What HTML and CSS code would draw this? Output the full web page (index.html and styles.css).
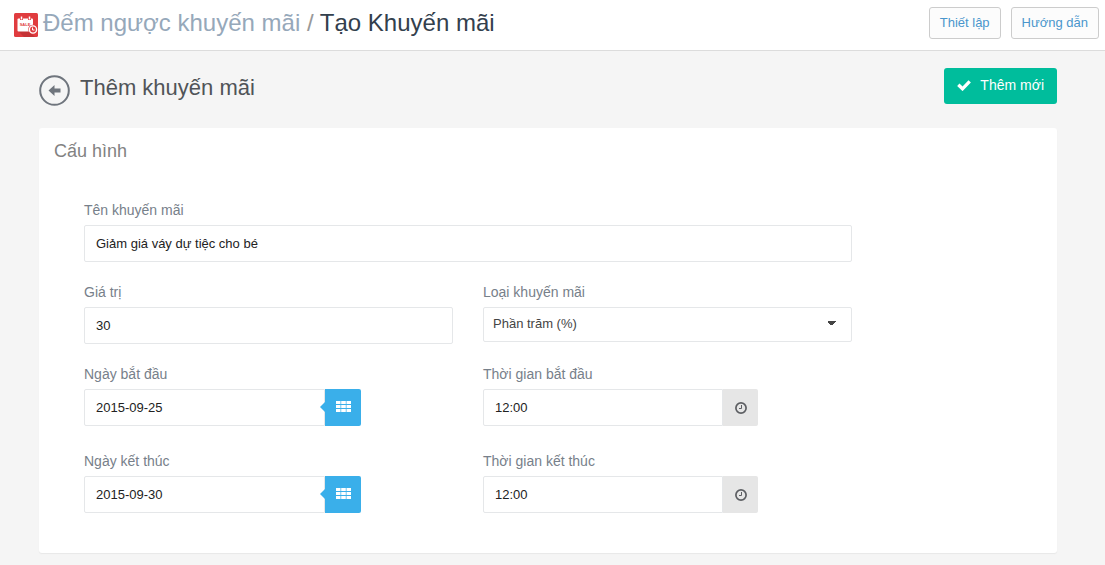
FILE: index.html
```html
<!DOCTYPE html>
<html lang="vi">
<head>
<meta charset="utf-8">
<meta name="viewport" content="width=device-width, initial-scale=1">
<title>Tạo Khuyến mãi</title>
<link rel="stylesheet" href="styles.css">
</head>
<body>
<svg class="sprite" aria-hidden="true">
  <symbol id="grid" viewBox="0 0 15 11"><path d="M0 0h4.500v3H0zM5.200 0h4.600v3H5.200zM10.500 0H15v3h-4.500zM0 4h4.500v3H0zM5.200 4h4.600v3H5.200zM10.500 4H15v3h-4.500zM0 8h4.500v3H0zM5.200 8h4.600v3H5.200zM10.500 8H15v3h-4.500z" fill="currentColor"/></symbol>
  <symbol id="clock" viewBox="0 0 12 12"><circle cx="6" cy="6" r="5.1" fill="none" stroke="currentColor" stroke-width="1.7"/><path d="M6.500 3v3.500H4" fill="none" stroke="currentColor"/></symbol>
</svg>
<header class="topbar">
  <svg class="logo" viewBox="0 0 24 24" aria-hidden="true">
    <rect width="24" height="24" rx="1.500" fill="#e03c3f"/>
    <path d="M4 18h11l6 6H10z" fill="#c53336"/>
    <rect x="3.500" y="5.500" width="15.500" height="13" rx="1" fill="#fff"/>
    <path d="M7.500 3.500v3.500M15.500 3.500v3.500" stroke="#e03c3f" stroke-width="3"/>
    <path d="M7.500 3.500v3M15.500 3.500v3" stroke="#fff" stroke-width="1.500"/>
    <text class="logo-text" x="11" y="13">SALE</text>
    <circle cx="19" cy="16.500" r="4.800" fill="#e03c3f"/>
    <circle cx="19" cy="16.500" r="3.600" fill="none" stroke="#fff" stroke-width="1.400"/>
    <path d="M18.500 14.500v2.500h2" fill="none" stroke="#fff"/>
  </svg>
  <h1 class="crumbs"><a class="crumb-link" href="#">Đếm ngược khuyến mãi</a> <span class="crumb-sep">/</span> Tạo Khuyến mãi</h1>
  <nav class="top-actions">
    <a class="btn-light" href="#">Thiết lập</a>
    <a class="btn-light" href="#">Hướng dẫn</a>
  </nav>
</header>
<main class="page">
  <div class="page-head">
    <div class="heading">
      <a class="back" href="#" aria-label="Quay lại"><svg class="back-icon" viewBox="0 0 31 31" aria-hidden="true"><circle cx="15.500" cy="15.500" r="14.300" fill="none" stroke="currentColor" stroke-width="2"/><path d="M9.500 15.500l6-5.500v3.500h6v4h-6V21z" fill="currentColor"/></svg></a>
      <h2 class="page-title">Thêm khuyến mãi</h2>
    </div>
    <button class="btn-primary" type="submit" form="promo"><svg class="check" viewBox="0 0 14 12" aria-hidden="true"><path d="M1.300 5.800l4.200 4 7.200-7.500" fill="none" stroke="currentColor" stroke-width="3.300"/></svg>Thêm mới</button>
  </div>
  <section class="card">
    <h3 class="card-title">Cấu hình</h3>
    <form class="form" id="promo">
      <div class="field wide"><label for="name">Tên khuyến mãi</label><input class="control" id="name" type="text" value="Giảm giá váy dự tiệc cho bé"></div>
      <div class="field"><label for="value">Giá trị</label><input class="control" id="value" type="text" value="30"></div>
      <div class="field"><label for="type">Loại khuyến mãi</label><select class="control select" id="type"><option>Phần trăm (%)</option></select></div>
      <div class="field"><label for="sd">Ngày bắt đầu</label><div class="group"><input class="control" id="sd" type="text" value="2015-09-25"><button class="addon blue" type="button" aria-label="Chọn ngày bắt đầu"><svg class="grid-icon"><use href="#grid"/></svg></button></div></div>
      <div class="field"><label for="st">Thời gian bắt đầu</label><div class="group time"><input class="control" id="st" type="text" value="12:00"><button class="addon gray" type="button" aria-label="Chọn giờ bắt đầu"><svg class="clock-icon"><use href="#clock"/></svg></button></div></div>
      <div class="field last"><label for="ed">Ngày kết thúc</label><div class="group"><input class="control" id="ed" type="text" value="2015-09-30"><button class="addon blue" type="button" aria-label="Chọn ngày kết thúc"><svg class="grid-icon"><use href="#grid"/></svg></button></div></div>
      <div class="field last"><label for="et">Thời gian kết thúc</label><div class="group time"><input class="control" id="et" type="text" value="12:00"><button class="addon gray" type="button" aria-label="Chọn giờ kết thúc"><svg class="clock-icon"><use href="#clock"/></svg></button></div></div>
    </form>
  </section>
</main>
</body>
</html>
```
FILE: styles.css
```css
* { box-sizing: border-box; }
body { margin: 0; background: #f5f5f5; font: 14px/20px "Liberation Sans", Arial, sans-serif; color: #77808a; }
a { text-decoration: none; }
input, select, button { font: inherit; margin: 0; }
.sprite { position: absolute; width: 0; height: 0; }
.topbar { display: flex; align-items: center; min-height: 51px; padding: 0 6px 4px 14px; background: #fff; border-bottom: 1px solid #dcdcdc; }
.logo { width: 24px; height: 28px; padding-top: 4px; margin-right: 5px; flex: none; }
.logo-text { font: bold 4px "Liberation Sans", Arial, sans-serif; fill: #e03c3f; text-anchor: middle; }
.crumbs { margin: 0; font-size: 24px; line-height: 32px; font-weight: normal; color: #33404d; }
.crumb-link { color: #96a8ba; }
.crumb-sep { color: #999; }
.top-actions { display: flex; gap: 10px; margin-left: auto; }
.btn-light { padding: 5px 10px; border: 1px solid #ccc; border-radius: 3px; background: #fcfcfc; color: #4a96cc; font-size: 13px; }
.page { padding: 17px 48px 12px 39px; }
.page-head { display: flex; justify-content: space-between; margin-bottom: 20px; }
.heading { display: flex; align-items: center; gap: 10px; padding-top: 4px; height: 40px; }
.back { color: #6f757d; }
.back-icon { display: block; width: 31px; height: 31px; }
.page-title { margin: 0; padding-bottom: 4px; font-size: 22px; line-height: 32px; font-weight: normal; color: #505458; }
.btn-primary { display: flex; align-items: center; gap: 9px; height: 36px; padding: 0 13px 2px; border: 0; border-radius: 3px; background: #00bd9c; color: #fff; }
.check { width: 14px; height: 12px; }
.card { padding: 12px 15px 40px; background: #fff; border-radius: 3px; box-shadow: 0 1px 1px #e8e8e8; }
.card-title { margin: 0; font-size: 18px; line-height: 22px; font-weight: normal; color: #828282; }
.form { display: grid; grid-template-columns: 1fr 1fr; gap: 20px 30px; padding: 38px 190px 0 30px; }
.wide { grid-column: 1 / -1; }
.last { margin-top: 5px; }
.field label { display: block; margin-bottom: 5px; }
.control { display: block; width: 100%; height: 37px; padding: 0 11px; border: 1px solid #e5e7e9; border-radius: 2px; background: #fff; color: #222; font-size: 13px; }
.select { height: 35px; padding: 0 9px 2px; appearance: none; color: #444; background: linear-gradient(to bottom left, #444 50%, transparent 50%) no-repeat right 19px top 13px / 5px 5px, linear-gradient(to bottom right, #444 50%, transparent 50%) no-repeat right 15px top 13px / 4px 5px, #fff; }
.group { display: flex; width: 75%; }
.time { max-width: 275px; }
.group .control { flex: 1; min-width: 0; border-radius: 2px 0 0 2px; }
.addon { display: flex; align-items: center; justify-content: center; flex: none; width: 35px; padding: 0; border: 0; border-radius: 0 2px 2px 0; }
.blue { position: relative; width: 36px; padding: 0 0 2px 1px; background: #3aafea; color: #fff; }
.blue::before { content: ""; position: absolute; left: -5px; top: 13px; border: solid transparent; border-width: 5px 5px 5px 0; border-right-color: #3aafea; }
.gray { background: #e6e6e6; color: #5d5f63; }
.grid-icon { width: 15px; height: 11px; }
.clock-icon { width: 12px; height: 12px; }
```
